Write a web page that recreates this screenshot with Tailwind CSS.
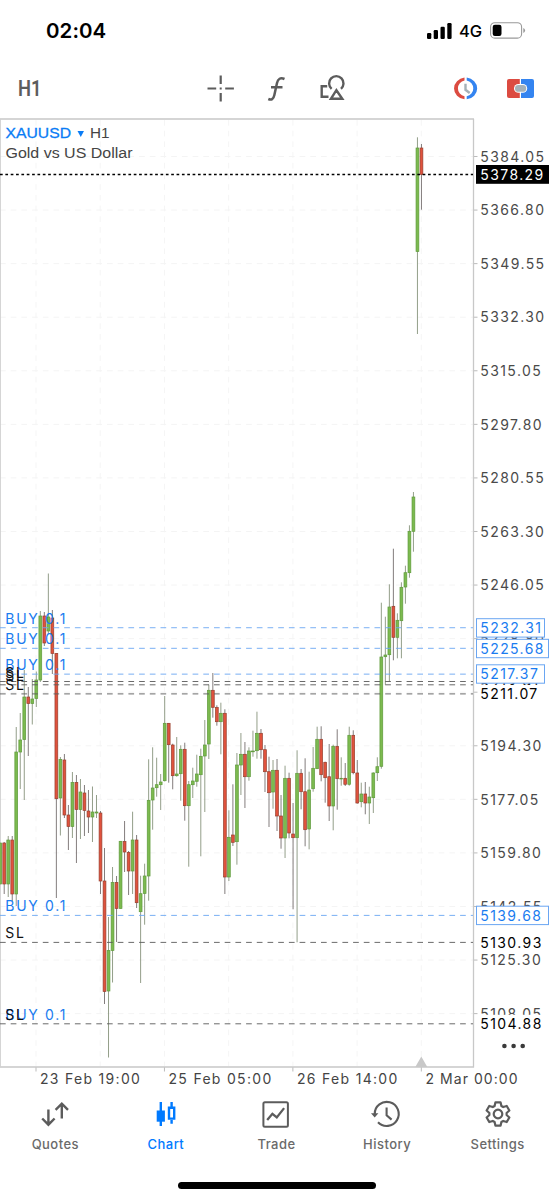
<!DOCTYPE html>
<html lang="en">
<head>
<meta charset="utf-8">
<title>XAUUSD H1</title>
<script src="https://cdn.jsdelivr.net/npm/@tailwindcss/browser@4"></script>
</head>
<body class="bg-white">
<div class="flex h-[1200px] w-[554px] flex-col overflow-hidden bg-white font-['Inter',sans-serif]">

  <!-- status bar -->
  <div class="flex h-[61px] items-center justify-between pr-[28px] pl-[46px]">
    <span class="text-[20.5px] leading-6 font-semibold tracking-[0.05px] text-black">02:04</span>
    <div class="flex items-center">
      <svg class="h-4 w-[25px]" viewBox="0 0 25 16"><rect x="0" y="10" width="4.3" height="6" rx="1.2"/><rect x="6.7" y="7" width="4.3" height="9" rx="1.2"/><rect x="13.5" y="3.7" width="4.3" height="12.3" rx="1.2"/><rect x="20.3" y="0" width="4.3" height="16" rx="1.2"/></svg>
      <span class="ml-[7px] w-[23px] text-[16.5px] leading-5 font-medium">4G</span>
      <svg class="ml-2 h-[17px] w-9" viewBox="0 0 36 17"><rect x=".6" y=".7" width="31" height="15.4" rx="4.2" fill="none" stroke="#999" stroke-width="1.1"/><rect x="2.7" y="2.8" width="8.8" height="11.2" rx="2.2"/><path d="M33.3 6v5q1.8-.8 1.8-2.5T33.3 6z" fill="#999"/></svg>
    </div>
  </div>

  <!-- toolbar -->
  <svg class="h-[57px] w-[554px] shrink-0" viewBox="0 61 554 57" fill="none" stroke="#5c5c5c" stroke-width="2.2">
    <text x="18" y="95.8" font-family="Roboto" font-size="22" font-weight="600" textLength="23.5" lengthAdjust="spacingAndGlyphs" fill="#5c5c5c" stroke="none">H1</text>
    <path d="M207.500 88.500h8.700M225.200 88.500h8.700M220.700 75.500v8.400M220.700 93v8.600M219.700 88.500h2"/>
    <path d="M284.500 79c-4-1.800-6.600-.2-7.500 4l-2.700 12.200c-.9 4-2.900 5.200-6 3.800M271 87.200h11.500" stroke-width="2.500"/>
    <path d="M331.600 88.800A7.200 7.200 0 1 1 341 88.800M336.400 90.200L342.300 98.800H330.900zM327.200 86.200H321.700V96.700H328.500" stroke-width="2.400"/>
    <g stroke="none">
      <path fill="#dc4b41" d="M464.500 77.500A12.100 11 0 0 0 464.500 99.300V96.300A7.800 8 0 0 1 464.500 80.500z"/>
      <path fill="#3484f0" d="M466.700 77.500A12.100 11 0 0 1 466.700 99.300V96.300A7.800 8 0 0 0 466.700 80.500z"/>
      <path d="M465.500 83.800v6l4.200 3.200" stroke="#a5b1b8" stroke-width="2.400" fill="none"/>
      <path fill="#dc4b41" d="M509 79H519.800V98H509Q507 98 507 96V81Q507 79 509 79z"/>
      <path fill="#3484f0" d="M521 79H532Q534 79 534 81V96Q534 98 532 98H521z"/>
      <rect x="514" y="84" width="13.200" height="8.800" rx="4.400" fill="#fff"/>
      <rect x="515" y="85" width="11.200" height="6.800" rx="3.400" fill="#a5b1b8"/>
    </g>
  </svg>

  <!-- chart -->
  <svg id="chart" class="h-[972px] w-[554px] shrink-0" viewBox="0 118 554 972" font-size="14" letter-spacing="1.4"></svg>

  <!-- tab bar -->
  <nav class="grid h-[84px] w-[553px] grid-cols-5 pt-[10px] text-[13px] leading-[18px] font-medium tracking-[0.45px] text-[#6a6a6a]">
    <div class="flex flex-col items-center gap-[7px]">
      <svg class="h-7 w-[30px]" viewBox="0 0 30 28" fill="none" stroke="#5c5c5c" stroke-width="2.400"><path d="M8.400 9.500v15M2.200 18.500l6.200 6.200 6.200-6.200M21.800 18.600V4M15.600 9.800L21.800 3.600l6.200 6.200"/></svg>
      <span>Quotes</span>
    </div>
    <div class="flex flex-col items-center gap-[7px] text-[#007aff]">
      <svg class="h-7 w-[30px]" viewBox="0 0 30 28" fill="none" stroke="#007aff" stroke-width="2.400"><path d="M9.800 2v24M20.600 2v6M20.600 20v3.700"/><path d="M5.700 10.500h8.200v11.200H5.700z" fill="#007aff" stroke="none"/><path d="M18 7.700h5.200v10.900H18z"/></svg>
      <span>Chart</span>
    </div>
    <div class="flex flex-col items-center gap-[7px]">
      <svg class="h-7 w-[30px]" viewBox="0 0 30 28" fill="none" stroke="#5c5c5c" stroke-width="2"><rect x="2.400" y="2.200" width="24.500" height="24.500" rx="1.500"/><path d="M6.200 20l5.200-6.200 4.400 3.600 7.300-9.300" stroke-width="2.300"/></svg>
      <span>Trade</span>
    </div>
    <div class="flex flex-col items-center gap-[7px]">
      <svg class="h-7 w-[30px] overflow-visible" viewBox="0 0 30 28" fill="none" stroke="#5c5c5c" stroke-width="2.100"><path d="M2.700 14A12 12 0 1 1 6 22.200"/><path d="M-1 13.200H6.400L2.700 17.600z" fill="#5c5c5c" stroke="none"/><path d="M14.600 7.500v7.800l5 4.300"/></svg>
      <span>History</span>
    </div>
    <div class="flex flex-col items-center gap-[7px]">
      <svg class="h-7 w-[30px]" viewBox="-15 -14 30 28" fill="none" stroke="#5c5c5c" stroke-width="2.200" stroke-linejoin="round"><path d="M-2.600-11.600L2.600-11.600 3.400-8 5.230-6.940 8.750-8.050 11.350-3.550 8.630-1.060 8.630 1.060 11.350 3.550 8.750 8.050 5.230 6.940 3.400 8 2.600 11.600-2.600 11.600-3.400 8-5.230 6.940-8.750 8.050-11.350 3.550-8.630 1.060-8.630-1.060-11.350-3.550-8.750-8.050-5.230-6.940-3.400-8z"/><circle r="4.300"/></svg>
      <span>Settings</span>
    </div>
  </nav>

  <!-- home indicator -->
  <div class="mt-2 ml-[178px] h-[7px] w-[198px] shrink-0 rounded-full bg-black"></div>
</div>

<script>
// Each candle: direction (1 up, 0 down), high, body top, body bottom, low
const candles = [
[1,843,843,884,884],[0,842,843,884,894],[1,836,840,884,897],[0,836,840,894,901],[1,727,752,894,906],
[1,713,740,752,789],[1,670,697,739.5,800],[0,687,697,703.5,756],[1,679,699,703.5,724.5],[1,671.5,680,698.5,707],
[1,611,616,680,682],[0,612,616,643,646],[1,573.5,617,631,634],[0,610,618,653.5,674],[0,653,653.5,798.7,898],
[1,757,759.5,798,835.5],[0,754,760,815,818],[0,805,815,826.5,850],[1,772,782.5,826.5,838],[0,775,782.5,809.5,863],
[1,779,792,809.5,839],[0,785,793,810.5,836],[0,790,811,817,833],[1,786.5,812,817,842],[1,795,812,813,818],
[0,811,813,881,894],[0,848,881,991.5,1004],[1,917,950.5,991,1057.5],[1,867,882.5,950.5,982.5],[0,876,882.5,908.5,942],
[1,841,841.3,908.5,908.5],[0,821,841.5,852,872],[0,851,852.5,871,895],[1,811.7,840,871,894],[0,835,840,902.7,908],
[1,875.7,893.7,911.7,983],[1,863.7,876,893.5,924.7],[1,759.3,800.3,876,900.7],[1,747.3,788,800,829.7],[1,757.7,784.7,787.7,796.7],
[1,774,782,784.7,810],[1,696,723.3,780.7,781.5],[0,723,723.3,744.7,782.7],[0,743.7,745,775.7,789.3],[1,737,774,775.7,776.7],
[1,745.3,749.3,773.7,800.7],[0,742.7,749.3,805.7,820.7],[1,781,784.7,805.7,866.7],[1,767.7,781,784.7,798],[1,754.7,774,781.3,786.7],
[1,748.7,756.3,774.7,856.3],[1,720,745,756,812],[1,684.7,690.3,744,759],[0,673,690.3,707.3,717.7],[0,705.3,707.5,721.7,725.7],
[1,702.7,713.3,721.7,754.3],[0,709.3,713.3,877,894],[1,810.3,837.3,877,881],[0,784.3,835,842.3,846],[1,753,765,841.7,864.7],
[1,733,754.3,765,795],[0,742,754.3,776.7,808],[1,747.3,751,776.7,780.7],[1,730.7,751,751.8,756.7],[1,711.7,733.3,750.7,758.7],
[0,729,733.3,749.7,758.7],[0,745,749.7,771.7,792],[0,756.7,771.7,792.7,827],[1,760,770.3,792,808.7],[0,759,770.3,816,831],
[0,795,816,838,848.7],[1,765.7,778.3,838,858],[0,772.7,778.3,833,838.3],[0,803,834,837.7,909.3],[1,750.3,773.3,837.7,942.3],
[0,769,773.3,791.7,809.3],[0,758.3,791.7,829.7,846.3],[1,771.7,790,829,849.3],[1,747,768.3,788.7,791.7],[1,726.7,739.3,768.7,769],
[0,726.3,739.3,774.7,781.3],[0,761.7,762.3,777.7,802.7],[0,744,776.7,806,821],[1,744.7,746.3,806,830.3],[0,729.3,746.3,778.7,809.7],
[1,757.3,778.3,779,785.7],[0,763,778.3,784.3,786],[1,726.7,735.3,784.3,785.7],[0,730.3,735.3,772.7,774.3],[0,760,773,803,803.7],
[1,782.7,794,801.7,807.3],[0,782,794,803,814.3],[1,786.7,797,803,824],[1,772.3,773,797.7,813],[1,757.3,766.7,772.7,781],
[1,602.7,657,766.3,768.7],[1,616.7,655,656.7,684.7],[1,584.3,607,654.7,681.7],[0,548.7,606.3,637.3,660.3],[1,613.3,620.3,637.3,658.3],
[1,582.3,587.3,620.7,658.3],[1,565.7,572.7,587,603.7],[1,525.3,531.3,572.7,577.7],[1,492,497,531.3,551.7],[1,137.3,148,251.5,334],
[0,144,148,174.5,209.7]
];
const priceY = p => 156.5 + (5384.05 - p) / 17.25 * 53.57;
const ff = 'font-family="Inter, sans-serif"';
let s = '';

// grid, frame and axes
for (let i = 0; i < 7; i++) {
  const x = 36 + i * 64.22;
  s += `<path d="M${x} 120V1066" stroke="#f5f5f5" stroke-width="1" stroke-dasharray="5.7 5"/>`;
  if (i % 2 === 0) s += `<path d="M${x} 1067v4.5" stroke="#bbb"/>`;
}
for (let i = 0; i < 17; i++) {
  const y = 156.5 + i * 53.57, p = (5384.05 - i * 17.25).toFixed(2);
  s += `<path d="M0 ${y}H473" stroke="#f4f4f4" stroke-dasharray="5.7 5"/><path d="M474 ${y}h3.5" stroke="#bbb"/>`;
  s += `<text x="480.3" y="${y + 5.2}" ${ff} fill="#4a4a4a">${p}</text>`;
}
s += '<path d="M0 119H474M473.5 119V1067.5M0 1067H474" stroke="#c8c8c8" stroke-width="1.3" fill="none"/><path d="M.4 119V1067" stroke="#d0d0d0"/>';
s += '<path d="M421.3 1056.5l6 10.500h-12z" fill="#c8c8c8"/>';

// candles
candles.forEach(([up, h, t, b, l], i) => {
  const x = 0.2 + i * 4.012, edge = up ? '#5f9a3c' : '#96402f', fill = up ? '#7cba4f' : '#e0523d';
  s += `<path d="M${x} ${h}V${l}" stroke="${up ? '#7f8c74' : '#6d6565'}" stroke-width=".85"/>`;
  s += `<rect x="${x - 1.4}" y="${t}" width="2.8" height="${Math.max(b - t, .5)}" fill="${fill}" stroke="${edge}" stroke-width=".7"/>`;
});

// order levels
[5232.31, 5225.68, 5217.37, 5139.68].forEach(p => s += `<path d="M0 ${priceY(p)}H473" stroke="#6aa6f2" stroke-width=".9" stroke-dasharray="5.7 5"/>`);
[681.5, 684.8, 693.9, 942.4, 1023.8].forEach(y => s += `<path d="M0 ${y}H473" stroke="#5a5a5a" stroke-width=".9" stroke-dasharray="5.7 5"/>`);
[623.6, 644.2, 670, 911.2, 1019.5].forEach(y => s += `<text x="5.3" y="${y}" ${ff} letter-spacing="1.7" fill="#1a7cf0">BUY 0.1</text>`);
[677.5, 680.8, 689.7, 938.4, 1019.5].forEach(y => s += `<text x="5.3" y="${y}" ${ff} letter-spacing="1.7" fill="#111">SL</text>`);
s += '<path d="M0 174.5H473" stroke="#000" stroke-width="1.3" stroke-dasharray="2.7 2.65"/>';

// price tags
const plain = (p, y) => s += `<rect x="478" y="${y - 9}" width="72" height="18" fill="#fff"/><text x="480.3" y="${y + 5.2}" ${ff} fill="#000">${p}</text>`;
plain('5213.91', 684.8); plain('5211.07', 693.9); plain('5130.93', 942.4); plain('5104.88', 1023.8);
const boxed = (p, y, w) => s += `<rect x="476.5" y="${y - 9.2}" width="${w}" height="18.4" fill="#fff" stroke="#6aa6f2"/><text x="480.3" y="${y + 5.2}" ${ff} fill="#1a7cf0">${p}</text>`;
boxed('5232.31', 627.9, 68); boxed('5225.68', 648.5, 72); boxed('5217.37', 674, 68); boxed('5139.68', 915.4, 72);
s += `<rect x="476" y="165" width="73" height="18.8" fill="#000"/><text x="480.3" y="179.7" ${ff} fill="#fff">5378.29</text>`;

// dates, overflow dots, title
[['23 Feb 19:00', 40], ['25 Feb 05:00', 168.5], ['26 Feb 14:00', 297], ['2 Mar 00:00', 425.5]].forEach(([t, x]) => s += `<text x="${x}" y="1083.8" ${ff} letter-spacing="${t[1] === ' ' ? 1.05 : 1.3}" fill="#444">${t}</text>`);
[504.4, 513.6, 522.7].forEach(x => s += `<circle cx="${x}" cy="1046" r="2.3" fill="#3a3a3a"/>`);
const hf = 'font-family="Liberation Sans, sans-serif" font-size="15.5" letter-spacing="0" lengthAdjust="spacingAndGlyphs"';
s += `<text x="5.5" y="138" ${hf} textLength="65.5" fill="#0a7cf5" stroke="#0a7cf5" stroke-width=".3">XAUUSD</text><path d="M77.5 131h6.500l-3.250 6z" fill="#0a7cf5"/>`;
s += `<text x="90" y="138" ${hf} textLength="19.5" fill="#444">H1</text><text x="5.5" y="157.7" ${hf} textLength="127" fill="#444">Gold vs US Dollar</text>`;
document.getElementById('chart').innerHTML = s;
</script>
</body>
</html>
